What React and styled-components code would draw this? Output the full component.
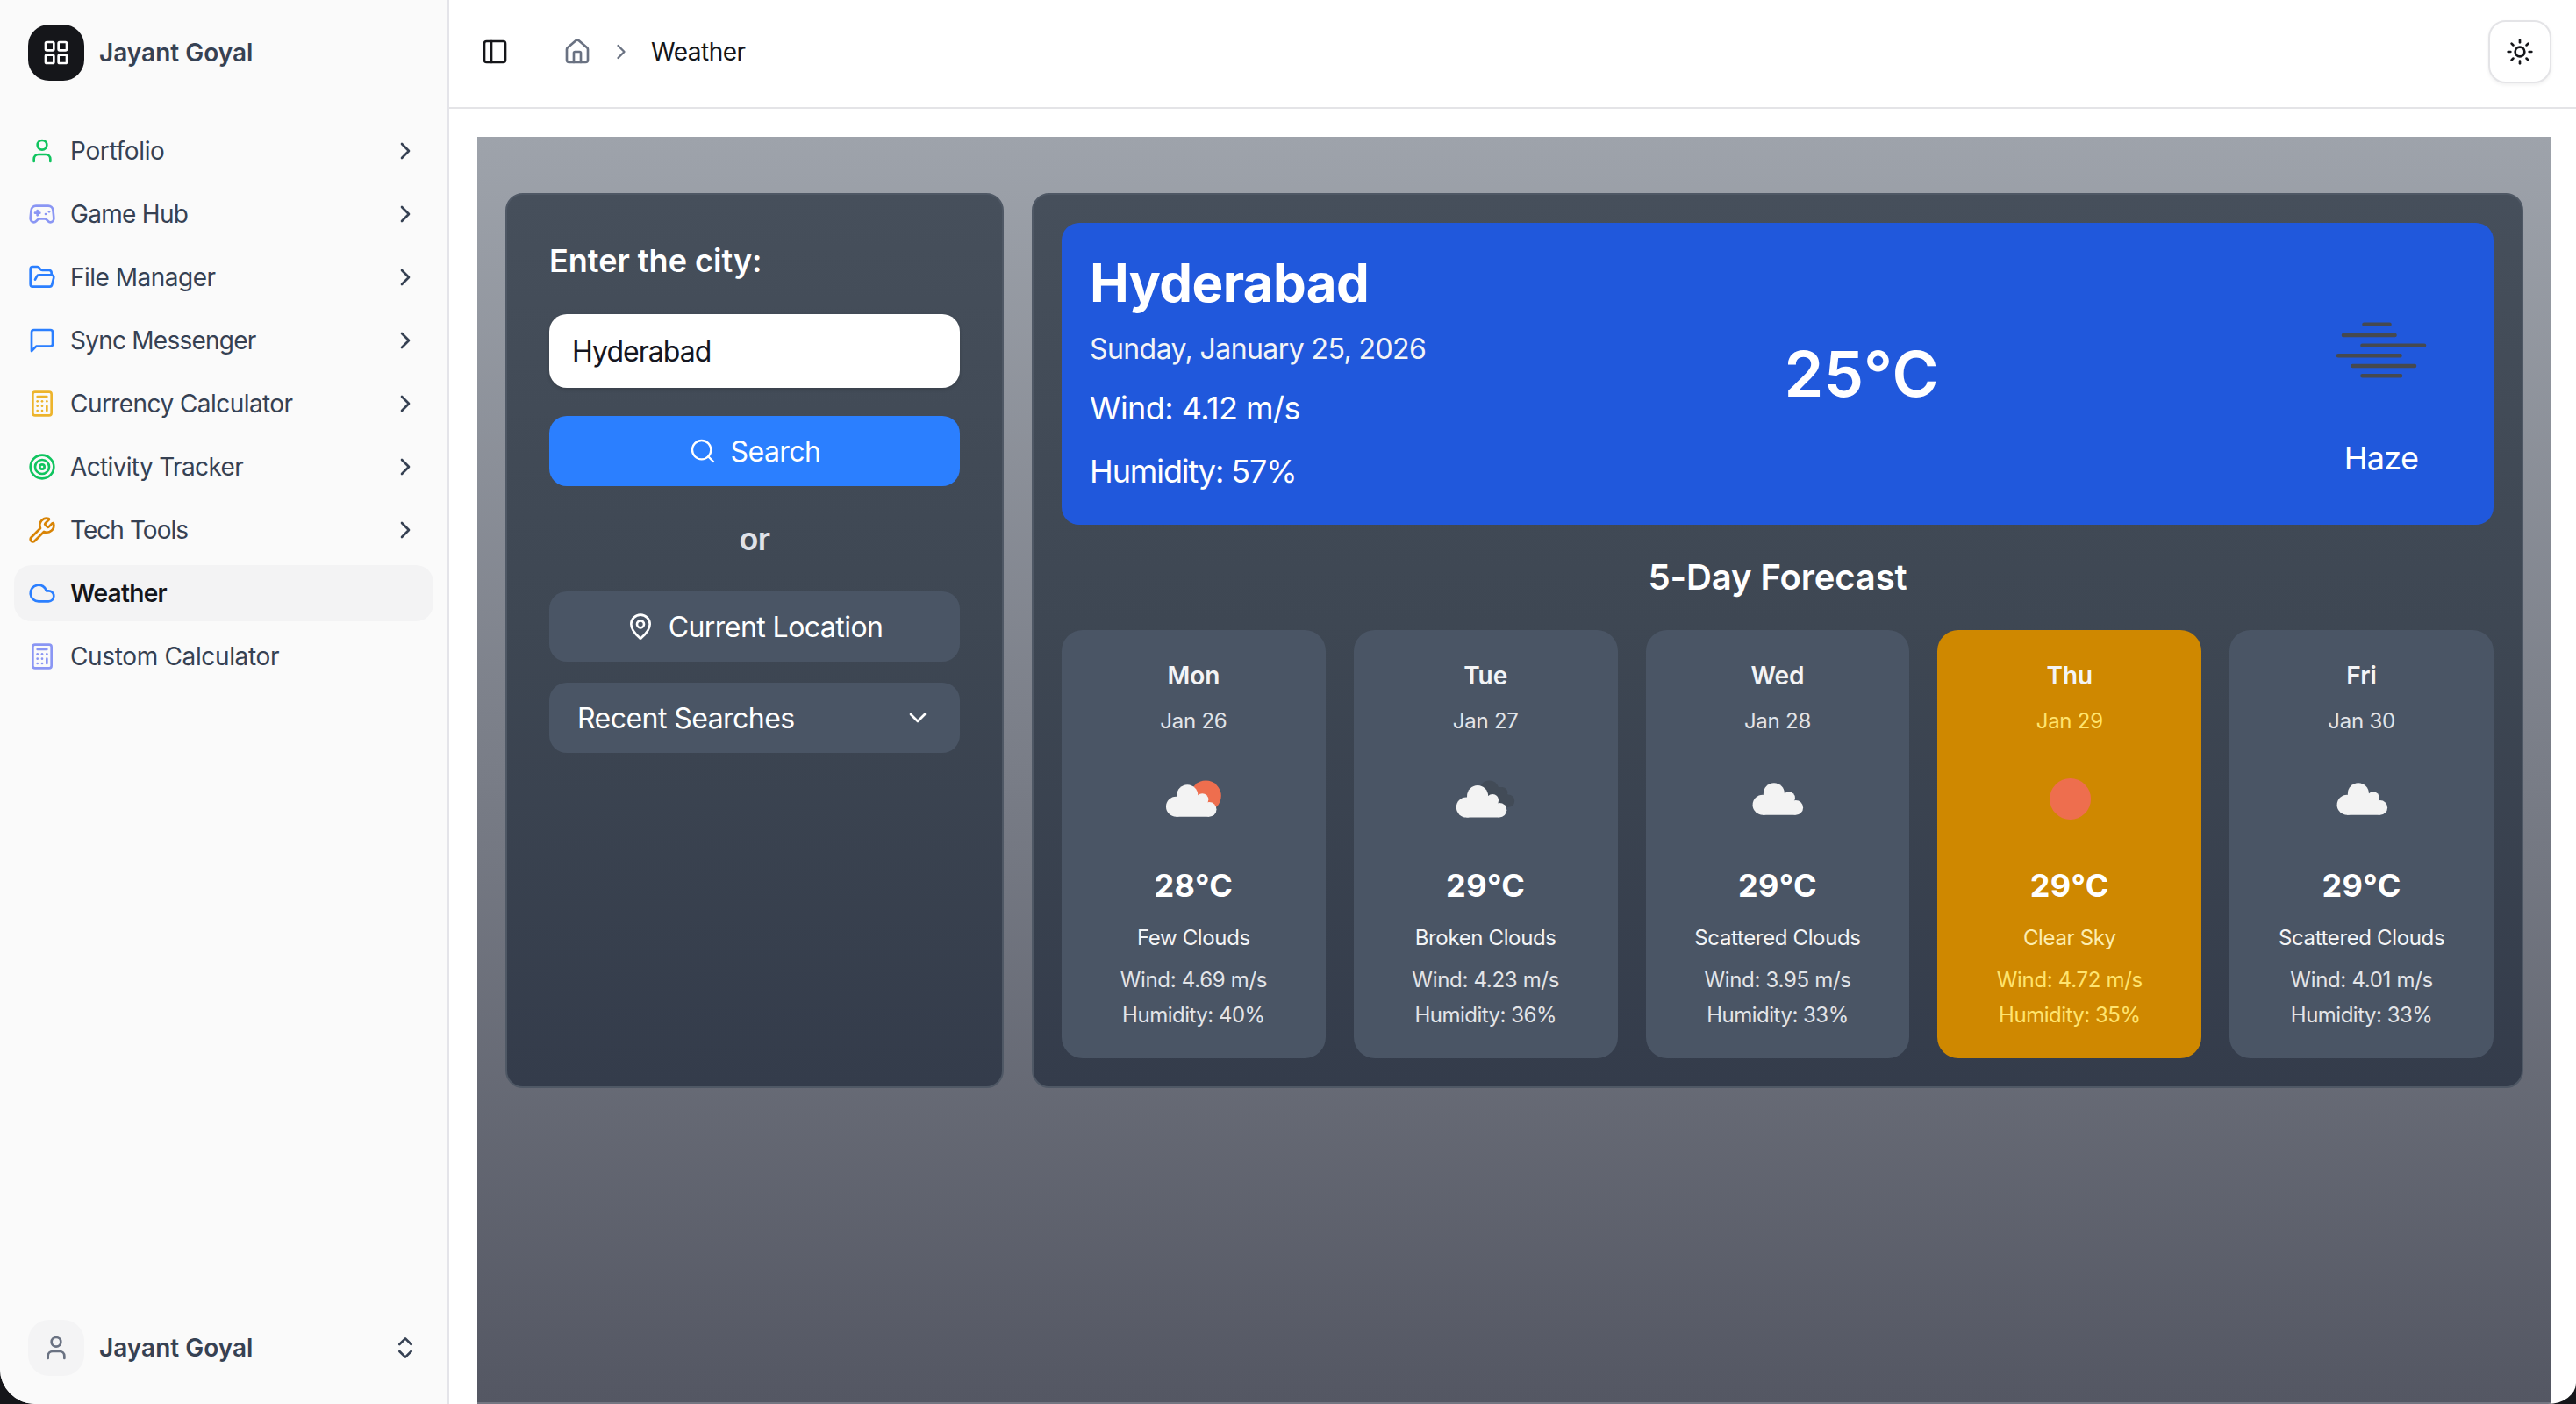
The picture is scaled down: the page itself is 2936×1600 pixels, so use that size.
import styled, { createGlobalStyle } from "styled-components";
import {
  Calculator,
  ChevronDown,
  ChevronRight,
  ChevronsUpDown,
  Cloud,
  FolderOpen,
  Gamepad2,
  House,
  LayoutGrid,
  MapPin,
  PanelLeft,
  Search,
  Sun,
  Target,
  User,
  Wrench,
} from "lucide-react";

const GlobalStyle = createGlobalStyle`
  * {
    box-sizing: border-box;
  }
  body {
    margin: 0;
    background: #15161a;
    font-family: Inter, "Liberation Sans", sans-serif;
  }
  h1, h2, p {
    margin: 0;
  }
  button, input {
    font-family: inherit;
    border: 0;
    margin: 0;
  }
  svg {
    display: block;
    flex-shrink: 0;
  }
`;

const Window = styled.div`
  display: flex;
  width: 2936px;
  height: 1600px;
  overflow: hidden;
  background: #fff;
  border-bottom-left-radius: 40px;
  border-bottom-right-radius: 32px 24px;
`;

/* sidebar */

const Sidebar = styled.aside`
  display: flex;
  flex-direction: column;
  width: 512px;
  flex-shrink: 0;
  padding: 28px 16px 32px;
  background: #fafafa;
  border-right: 2px solid #e4e4e9;
`;

const Account = styled.div`
  display: flex;
  align-items: center;
  gap: 16px;
  height: 64px;
  padding: 0 16px;
  color: #364153;
`;

const Avatar = styled.div`
  display: flex;
  align-items: center;
  justify-content: center;
  width: 64px;
  height: 64px;
  border-radius: 24px;
  color: ${(p) => (p.$dark ? "#fff" : "#6a7282")};
  background: ${(p) => (p.$dark ? "#15161a" : "#f4f4f5")};
`;

const AccountName = styled.span`
  flex: 1;
  padding-left: 1px;
  font-size: 28px;
  font-weight: 600;
  line-height: 40px;
`;

const Nav = styled.nav`
  display: flex;
  flex-direction: column;
  flex: 1;
  gap: 8px;
  padding-top: 48px;
`;

const NavItem = styled.a`
  display: flex;
  align-items: center;
  gap: 16px;
  height: 64px;
  padding: 0 16px;
  border-radius: 20px;
  color: ${(p) => (p.$active ? "#15161a" : "#364153")};
  background: ${(p) => (p.$active ? "#f3f3f4" : "transparent")};
  font-size: 28px;
  font-weight: ${(p) => (p.$active ? 600 : 400)};
  letter-spacing: ${(p) => p.$tracking}px;
`;

const NavIcon = styled.span`
  color: ${(p) => p.$color};
`;

const NavLabel = styled.span`
  flex: 1;
`;

/* header */

const Main = styled.main`
  display: flex;
  flex-direction: column;
  flex: 1;
  min-width: 0;
`;

const Header = styled.header`
  display: flex;
  align-items: center;
  height: 124px;
  padding: 0 28px 4px 36px;
  border-bottom: 2px solid #e4e4e7;
  color: #15161a;
`;

const Breadcrumb = styled.div`
  display: flex;
  align-items: center;
  flex: 1;
  gap: 20px;
  margin-left: 62px;
  color: #6a7282;
`;

const Crumb = styled.span`
  color: #15161a;
  font-size: 28px;
  letter-spacing: -0.5px;
`;

const ThemeButton = styled.button`
  display: flex;
  align-items: center;
  justify-content: center;
  width: 72px;
  height: 72px;
  padding: 0;
  border: 2px solid #e4e4e7;
  border-radius: 20px;
  background: #fff;
  color: #15161a;
  box-shadow: 0 2px 4px rgba(0, 0, 0, 0.06);
`;

/* weather page */

const Page = styled.section`
  display: grid;
  grid-template-columns: 568px 1fr;
  align-items: start;
  gap: 32px;
  flex: 1;
  margin: 32px 28px 0 32px;
  padding: 64px 32px 0;
  border-bottom: 2px solid #747682;
  background: linear-gradient(#9ea3ab, #545763);
`;

const Panel = styled.div`
  height: 1020px;
  padding: ${(p) => p.$pad}px;
  border: 2px solid #4f5865;
  border-radius: 20px;
  background: linear-gradient(#464f5b, #3e4753 48%, #343c4b);
  color: #fff;
`;

const FieldLabel = styled.p`
  font-size: 36px;
  font-weight: 600;
  line-height: 54px;
  letter-spacing: 0;
`;

const CityInput = styled.input`
  display: block;
  width: 100%;
  height: 84px;
  margin: 34px 0 32px;
  padding: 0 26px;
  border-radius: 20px;
  background: #fff;
  color: #15161f;
  font-size: 32px;
  letter-spacing: -0.95px;
  box-shadow: 0 2px 4px rgba(0, 0, 0, 0.15);
`;

const Button = styled.button`
  display: flex;
  align-items: center;
  justify-content: ${(p) => (p.$spread ? "space-between" : "center")};
  gap: 16px;
  width: 100%;
  height: 80px;
  padding: 0 32px;
  border-radius: 20px;
  background: ${(p) => (p.$primary ? "#2b7fff" : "#4a5565")};
  color: #fff;
  font-size: 32px;
  letter-spacing: -0.55px;

  & + & {
    margin-top: 24px;
  }
`;

const Divider = styled.p`
  margin: 32px 0;
  color: #e0e2e8;
  font-size: 36px;
  font-weight: 600;
  line-height: 56px;
  letter-spacing: -0.5px;
  text-align: center;
`;

const Current = styled.div`
  display: flex;
  align-items: center;
  justify-content: space-between;
  height: 344px;
  padding: 32px;
  border-radius: 20px;
  background: #2058dc;
`;

const CityName = styled.h1`
  font-size: 60px;
  font-weight: 700;
  line-height: 72px;
  letter-spacing: -0.6px;
`;

const CurrentDate = styled.p`
  margin-top: 16px;
  color: #f3f4f6;
  font-size: 32px;
  line-height: 48px;
  letter-spacing: -0.58px;
`;

const CurrentStat = styled.p`
  margin-top: 15px;
  font-size: 36px;
  line-height: 57px;
  letter-spacing: ${(p) => p.$tracking}px;
`;

const CurrentTemp = styled.p`
  padding-bottom: 2px;
  font-size: 72px;
  font-weight: 600;
  letter-spacing: 0.4px;
`;

const Condition = styled.div`
  width: 192px;
  font-size: 36px;
  line-height: 56px;
  letter-spacing: -0.7px;
  text-align: center;
`;

const ForecastTitle = styled.h2`
  margin: 32px 0;
  font-size: 40px;
  font-weight: 600;
  line-height: 56px;
  letter-spacing: -0.1px;
  text-align: center;
`;

const Forecast = styled.div`
  display: grid;
  grid-template-columns: repeat(5, 1fr);
  gap: 32px;
`;

const DayCard = styled.div`
  display: flex;
  flex-direction: column;
  align-items: center;
  height: 488px;
  padding-top: 32px;
  border-radius: 24px;
  background: ${(p) => (p.$sunny ? "#cf8800" : "#4a5565")};
  color: ${(p) => (p.$sunny ? "#fdedb0" : "#f3f4f6")};
  font-size: 24px;
`;

const DayName = styled.p`
  color: #f3f4f6;
  font-size: 28px;
  font-weight: 600;
  line-height: 40px;
`;

const DayDate = styled.p`
  margin: 14px 0 7px;
  color: ${(p) => (p.$sunny ? "#ffe46f" : "#e2e4e8")};
  line-height: 36px;
  letter-spacing: -0.23px;
`;

const DayTemp = styled.p`
  margin: 6px 0 14px;
  color: #fff;
  font-size: 36px;
  font-weight: 700;
  line-height: 56px;
  letter-spacing: 0.4px;
`;

const DaySummary = styled.p`
  margin-bottom: 10px;
  line-height: 36px;
  letter-spacing: -0.36px;
`;

const DayStat = styled.p`
  color: ${(p) => (p.$sunny ? "#ffe46f" : "#e2e4e8")};
  line-height: 40px;
  letter-spacing: ${(p) => p.$tracking}px;
`;

/* icons */

const MessageIcon = ({ size }) => (
  <svg
    width={size}
    height={size}
    viewBox="0 0 24 24"
    fill="none"
    stroke="currentColor"
    strokeWidth="2"
    strokeLinecap="round"
    strokeLinejoin="round"
  >
    <path d="M21 15a2 2 0 0 1-2 2H7l-4 4V5a2 2 0 0 1 2-2h14a2 2 0 0 1 2 2z" />
  </svg>
);

const CloudShape = ({ x, y }) => (
  <g transform={`translate(${x} ${y})`} fill="#f3f3f3">
    <circle cx="11.5" cy="25" r="11.5" />
    <circle cx="24.3" cy="12" r="12" />
    <circle cx="41.3" cy="17" r="7" />
    <circle cx="49.2" cy="28.2" r="8.3" />
    <path d="M11.5 36.5V20l1-8H36l6 5 7 6v13.5z" />
  </g>
);

const WeatherIcon = ({ type }) => (
  <svg width="128" height="128" viewBox="0 0 128 128">
    {type === "clear" && <circle cx="64.6" cy="63.5" r="23.5" fill="#ee6e4e" />}
    {type === "few" && <circle cx="78.3" cy="60" r="17.5" fill="#ee6e4e" />}
    {type === "broken" && (
      <g fill="#424b57">
        <circle cx="68.4" cy="53.5" r="11" />
        <circle cx="83" cy="56.3" r="6.3" />
        <circle cx="90" cy="65.7" r="7.2" />
        <path d="M68 50l15 0 7 9v13.9H68z" />
      </g>
    )}
    {type === "few" && <CloudShape x={33} y={47.2} />}
    {type === "broken" && <CloudShape x={30.8} y={48} />}
    {type === "scattered" && <CloudShape x={35.6} y={45.2} />}
  </svg>
);

const HazeIcon = () => (
  <svg width="192" height="192" viewBox="2618 302 192 192" stroke="#46494f" strokeWidth="4.6" strokeLinecap="round">
    <path d="M2694.5 369.8h29M2671 382h58.5M2692.5 393.8h70.5M2665 405.3h70.5M2681.5 417h70.5M2692.5 428.3h43.5" />
  </svg>
);

const navItems = [
  { label: "Portfolio", icon: User, color: "#10c45f", tracking: -0.35 },
  { label: "Game Hub", icon: Gamepad2, color: "#8a96f4", tracking: -0.7 },
  { label: "File Manager", icon: FolderOpen, color: "#2b7fff", tracking: -0.5 },
  { label: "Sync Messenger", icon: MessageIcon, color: "#2b7fff", tracking: -0.76 },
  { label: "Currency Calculator", icon: Calculator, color: "#edb42c", tracking: -0.56 },
  { label: "Activity Tracker", icon: Target, color: "#10c45f", tracking: -0.65 },
  { label: "Tech Tools", icon: Wrench, color: "#d88406", tracking: -0.95 },
  { label: "Weather", icon: Cloud, color: "#2b7fff", tracking: -0.7, active: true },
  { label: "Custom Calculator", icon: Calculator, color: "#8a96f4", tracking: -0.35, leaf: true },
];

const days = [
  { day: "Mon", date: "Jan 26", type: "few", temp: 28, summary: "Few Clouds", wind: "4.69", humidity: 40 },
  { day: "Tue", date: "Jan 27", type: "broken", temp: 29, summary: "Broken Clouds", wind: "4.23", humidity: 36 },
  { day: "Wed", date: "Jan 28", type: "scattered", temp: 29, summary: "Scattered Clouds", wind: "3.95", humidity: 33 },
  { day: "Thu", date: "Jan 29", type: "clear", temp: 29, summary: "Clear Sky", wind: "4.72", humidity: 35 },
  { day: "Fri", date: "Jan 30", type: "scattered", temp: 29, summary: "Scattered Clouds", wind: "4.01", humidity: 33 },
];

const AppSidebar = () => (
  <Sidebar>
    <Account>
      <Avatar $dark>
        <LayoutGrid size={32} />
      </Avatar>
      <AccountName>Jayant Goyal</AccountName>
    </Account>
    <Nav>
      {navItems.map(({ label, icon: Icon, color, tracking, active, leaf }) => (
        <NavItem key={label} $active={active} $tracking={tracking}>
          <NavIcon $color={color}>
            <Icon size={32} />
          </NavIcon>
          <NavLabel>{label}</NavLabel>
          {!active && !leaf && <ChevronRight size={32} />}
        </NavItem>
      ))}
    </Nav>
    <Account>
      <Avatar>
        <User size={32} />
      </Avatar>
      <AccountName>Jayant Goyal</AccountName>
      <ChevronsUpDown size={32} />
    </Account>
  </Sidebar>
);

const DayForecast = ({ day, date, type, temp, summary, wind, humidity }) => {
  const sunny = type === "clear";
  return (
    <DayCard $sunny={sunny}>
      <DayName>{day}</DayName>
      <DayDate $sunny={sunny}>{date}</DayDate>
      <WeatherIcon type={type} />
      <DayTemp>{temp}°C</DayTemp>
      <DaySummary>{summary}</DaySummary>
      <DayStat $sunny={sunny} $tracking={-0.32}>Wind: {wind} m/s</DayStat>
      <DayStat $sunny={sunny} $tracking={-0.5}>Humidity: {humidity}%</DayStat>
    </DayCard>
  );
};

export default function App() {
  return (
    <Window>
      <GlobalStyle />
      <AppSidebar />
      <Main>
        <Header>
          <PanelLeft size={32} />
          <Breadcrumb>
            <House size={32} />
            <ChevronRight size={28} />
            <Crumb>Weather</Crumb>
          </Breadcrumb>
          <ThemeButton>
            <Sun size={32} />
          </ThemeButton>
        </Header>
        <Page>
          <Panel $pad={48}>
            <FieldLabel>Enter the city:</FieldLabel>
            <CityInput defaultValue="Hyderabad" />
            <Button $primary>
              <Search size={32} strokeWidth={1.75} />
              Search
            </Button>
            <Divider>or</Divider>
            <Button>
              <MapPin size={32} />
              Current Location
            </Button>
            <Button $spread>
              Recent Searches
              <ChevronDown size={32} />
            </Button>
          </Panel>
          <Panel $pad={32}>
            <Current>
              <div>
                <CityName>Hyderabad</CityName>
                <CurrentDate>Sunday, January 25, 2026</CurrentDate>
                <CurrentStat $tracking={-0.55}>Wind: 4.12 m/s</CurrentStat>
                <CurrentStat $tracking={-1.1}>Humidity: 57%</CurrentStat>
              </div>
              <CurrentTemp>25°C</CurrentTemp>
              <Condition>
                <HazeIcon />
                Haze
              </Condition>
            </Current>
            <ForecastTitle>5-Day Forecast</ForecastTitle>
            <Forecast>
              {days.map((d) => (
                <DayForecast key={d.day} {...d} />
              ))}
            </Forecast>
          </Panel>
        </Page>
      </Main>
    </Window>
  );
}
